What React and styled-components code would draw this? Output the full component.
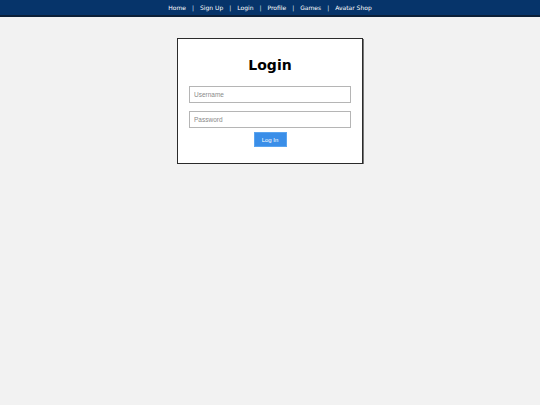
import React from 'react';
import styled, { createGlobalStyle } from 'styled-components';

const GlobalStyle = createGlobalStyle`
  html, body {
    margin: 0;
    padding: 0;
    background: #f2f2f2;
    font-family: "DejaVu Sans", sans-serif;
  }
`;

const NavBar = styled.nav`
  height: 15px;
  background: #06346a;
  border-bottom: 2px solid #0b1f38;
  display: flex;
  align-items: center;
  justify-content: center;
  gap: 6px;
  font-size: 6px;
  color: #ffffff;
`;

const NavLink = styled.a`
  color: #ffffff;
  text-decoration: none;
`;

const Sep = styled.span`
  color: #dbe3ee;
`;

const Main = styled.main`
  display: flex;
  justify-content: center;
  padding-top: 21px;
`;

const Card = styled.section`
  width: 160px;
  padding: 14px 12px 16px;
  background: #ffffff;
  border: 1px solid #2b2b2b;
  box-shadow: 1px 1px 0 #777;
  display: flex;
  flex-direction: column;
  align-items: center;
`;

const Title = styled.h1`
  margin: 4px 0 13px;
  font-size: 14px;
  font-weight: bold;
  color: #000;
`;

const Input = styled.input`
  box-sizing: border-box;
  width: 162px;
  height: 17px;
  margin-bottom: 8px;
  padding: 0 4px;
  border: 1px solid #b5b5b5;
  font-family: "Liberation Sans", sans-serif;
  font-size: 6.5px;
  &::placeholder {
    color: #8a8a8a;
  }
`;

const Button = styled.button`
  width: 33px;
  height: 15px;
  margin-top: -4px;
  background: #3a8ee8;
  border: 1px solid #5aa4ef;
  color: #ffffff;
  font-family: "Liberation Sans", sans-serif;
  font-size: 6px;
  padding: 0;
`;

const links = ['Home', 'Sign Up', 'Login', 'Profile', 'Games', 'Avatar Shop'];

export default function App() {
  return (
    <>
      <GlobalStyle />
      <NavBar>
        {links.map((l, i) => (
          <React.Fragment key={l}>
            {i > 0 && <Sep>|</Sep>}
            <NavLink href="#">{l}</NavLink>
          </React.Fragment>
        ))}
      </NavBar>
      <Main>
        <Card>
          <Title>Login</Title>
          <Input placeholder="Username" />
          <Input type="password" placeholder="Password" />
          <Button>Log In</Button>
        </Card>
      </Main>
    </>
  );
}
